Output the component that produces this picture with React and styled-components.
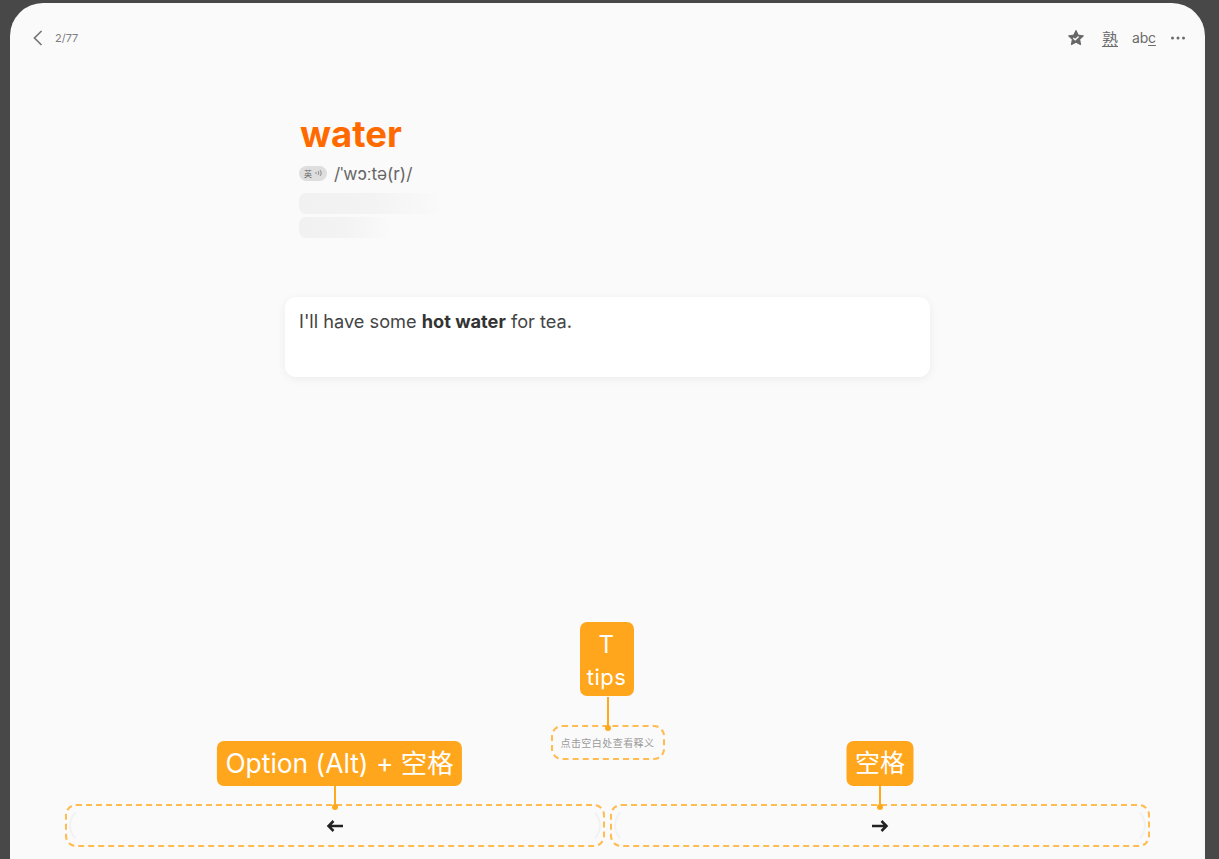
import React from "react";
import styled, { createGlobalStyle } from "styled-components";

const Global = createGlobalStyle`
  html, body { margin: 0; padding: 0; background: #484848; height: 100%; overflow: hidden; }
  body { font-family: Inter, "Noto Sans CJK SC", sans-serif; }
`;
const Page = styled.div`
  width: 1219px; height: 859px; padding: 3px 14px 0 10px; box-sizing: border-box; overflow: hidden;
`;
const Panel = styled.div`
  height: 880px; background: #fafafa; border-radius: 33px 33px 0 0; display: flex; flex-direction: column;
  box-sizing: border-box; position: relative; box-shadow: inset -5px 0 5px -4px rgba(0,0,0,0.025);
`;
const Header = styled.header`
  display: flex; justify-content: space-between; align-items: center; height: 70px; padding: 0 10px 0 21px; flex: none;
`;
const Left = styled.div`display: flex; align-items: center; gap: 10px;`;
const Count = styled.span`font-size: 11px; color: #7d7d7d;`;
const Actions = styled.div`display: flex; align-items: center; color: #666;`;
const Slot = styled.span`width: 34px; display: flex; justify-content: center; align-items: center;`;
const Glyph = styled.span`font-size: 16px; line-height: 18px; color: #6b6b6b; font-family: "Noto Sans CJK SC", sans-serif; text-decoration: underline; text-underline-offset: 1px;`;
const Abc = styled.span`font-size: 14px; line-height: 18px; color: #6b6b6b; letter-spacing: -0.2px;`;
const Under = styled.span`text-decoration: underline; text-underline-offset: 2px;`;
const Main = styled.main`width: 645px; margin: 0 auto; flex: none;`;
const Word = styled.h1`
  margin: 41px 0 0 15px; font-size: 36.5px; line-height: 41px; font-weight: 700; color: #ff6a00;
`;
const PhoneRow = styled.div`display: flex; align-items: center; gap: 7px; margin: 8px 0 0 14px; height: 20px;`;
const Pill = styled.span`
  width: 28px; height: 15px; border-radius: 8px; background: #dedede; color: #666; font-size: 8px;
  display: flex; align-items: center; justify-content: center; gap: 3px;
`;
const Phonetic = styled.span`font-size: 17.3px; color: #666; font-family: Inter, "DejaVu Sans", sans-serif;`;
const Skeleton = styled.div`
  margin: ${p => p.$top}px 0 0 14px; height: 21px; width: ${p => p.$w}px; border-radius: 7px;
  background: linear-gradient(90deg, #f1f1f1 0%, #f3f3f3 50%, #fafafa 100%);
`;
const Card = styled.section`
  margin-top: 59px; height: 80px; box-sizing: border-box; padding: 12px 14px; background: #fff; border-radius: 11px;
  box-shadow: 0 2px 10px rgba(0,0,0,0.06); font-size: 18.2px; line-height: 24px; color: #444;
  b { font-weight: 700; color: #333; }
`;
const Bottom = styled.div`
  position: absolute; left: 0; right: 0; top: 722px; display: flex; flex-direction: column; align-items: center;
`;
const Dashed = styled.div`
  position: relative; box-sizing: border-box; border: 2px dashed #ffbc50; border-radius: 11px; display: flex;
  align-items: center; justify-content: center;
`;
const Hint = styled(Dashed)`width: 114px; height: 35px; font-size: 10px; color: #9b9b9b; letter-spacing: 0.45px; font-family: "Noto Sans CJK SC", sans-serif;`;
const NavRow = styled.div`display: flex; gap: 5px; margin-top: 44px; width: 1085px;`;
const NavBox = styled(Dashed)`flex: 1; height: 43px; padding: 0 2px;`;
const NavInner = styled.div`
  flex: 1; height: 100%; border: 2px solid #f2f2f2; border-top-color: transparent; border-bottom-color: transparent;
  border-radius: 20px; box-sizing: border-box; display: flex; align-items: center; justify-content: center; color: #222;
`;
const Stem = styled.span`
  position: absolute; left: 50%; bottom: 100%; width: 2px; margin-left: -1px; height: ${p => p.$h}px; background: #ffa91f;
  &::after { content: ""; position: absolute; left: -2px; bottom: -4px; width: 6px; height: 6px; border-radius: 50%; background: #ffa91f; }
`;
const Callout = styled.div`
  position: absolute; left: 50%; bottom: calc(100% + ${p => p.$gap}px); transform: translateX(calc(-50% + ${p => p.$shift || 0}px));
  background: #ffa61c; color: #fff; border-radius: 7px; font-size: 26.4px; line-height: 44px; height: 45px; padding: 0 8.5px; white-space: nowrap;
  font-family: Inter, "Noto Sans CJK SC", sans-serif; text-align: center;
`;
const ShortCallout = styled(Callout)`font-size: 25px; width: 67px; padding: 0; box-sizing: border-box;`;
const TallCallout = styled(Callout)`
  line-height: 30px; padding: 8px 7px 2px; font-size: 24px; width: 54px; box-sizing: border-box; height: 74px;
  small { display: block; font-size: 22px; line-height: 34px; }
`;

const Star = () => (
  <svg width="18" height="18" viewBox="0 0 18 18" aria-hidden="true">
    <path d="M9 1.400l2.300 4.700 5.200.8-3.800 3.600.9 5.200L9 13.300l-4.600 2.400.9-5.200L1.500 6.900l5.200-.8z" fill="#666" stroke="#666" strokeLinejoin="round" strokeWidth="1" />
    <path d="M6.300 8.900l1.900 1.900 3.400-3.400" fill="none" stroke="#fafafa" strokeWidth="1.400" />
  </svg>
);
const More = () => (
  <svg width="18" height="18" viewBox="0 0 18 18" aria-hidden="true" fill="#6b6b6b">
    <circle cx="3.500" cy="9" r="1.500" /><circle cx="9" cy="9" r="1.500" /><circle cx="14.500" cy="9" r="1.500" />
  </svg>
);
const Back = () => (
  <svg width="14" height="18" viewBox="0 0 14 18" fill="none" stroke="#777" strokeWidth="1.700" aria-hidden="true">
    <path d="M10.500 2L3.500 9l7 7" />
  </svg>
);
const Speaker = () => (
  <svg width="7" height="8" viewBox="0 0 7 8" fill="none" stroke="#777" strokeWidth="0.800" aria-hidden="true">
    <path d="M1 3v2M3 2c1 1 1 3 0 4M5 1c1.500 1.500 1.500 4.500 0 6" />
  </svg>
);
const Arrow = ({ dir }) => (
  <svg width="18" height="14" viewBox="0 0 18 14" fill="none" stroke="#222" strokeWidth="2.500" aria-hidden="true">
    {dir === "left" ? <path d="M17 7H2.500M7.500 2L2.500 7l5 5" /> : <path d="M1 7h14.500M10.500 2l5 5-5 5" />}
  </svg>
);

export default function App() {
  return (
    <Page>
      <Global />
      <Panel>
        <Header>
          <Left><Back /><Count>2/77</Count></Left>
          <Actions>
            <Slot><Star /></Slot>
            <Slot><Glyph>熟</Glyph></Slot>
            <Slot><Abc>ab<Under>c</Under></Abc></Slot>
            <Slot><More /></Slot>
          </Actions>
        </Header>
        <Main>
          <Word>water</Word>
          <PhoneRow><Pill>英<Speaker /></Pill><Phonetic>/ˈwɔːtə(r)/</Phonetic></PhoneRow>
          <Skeleton $top={10} $w={145} />
          <Skeleton $top={3} $w={92} />
          <Card>I'll have some <b>hot water</b> for tea.</Card>
        </Main>
        <Bottom>
          <Hint>
            点击空白处查看释义
            <Stem $h={30} />
            <TallCallout $gap={31} $shift={-1}>T<small>tips</small></TallCallout>
          </Hint>
          <NavRow>
            <NavBox>
              <NavInner><Arrow dir="left" /></NavInner>
              <Stem $h={20} />
              <Callout $gap={20} $shift={4.5}>Option (Alt) + 空格</Callout>
            </NavBox>
            <NavBox>
              <NavInner><Arrow dir="right" /></NavInner>
              <Stem $h={20} />
              <ShortCallout $gap={20}>空格</ShortCallout>
            </NavBox>
          </NavRow>
        </Bottom>
      </Panel>
    </Page>
  );
}
